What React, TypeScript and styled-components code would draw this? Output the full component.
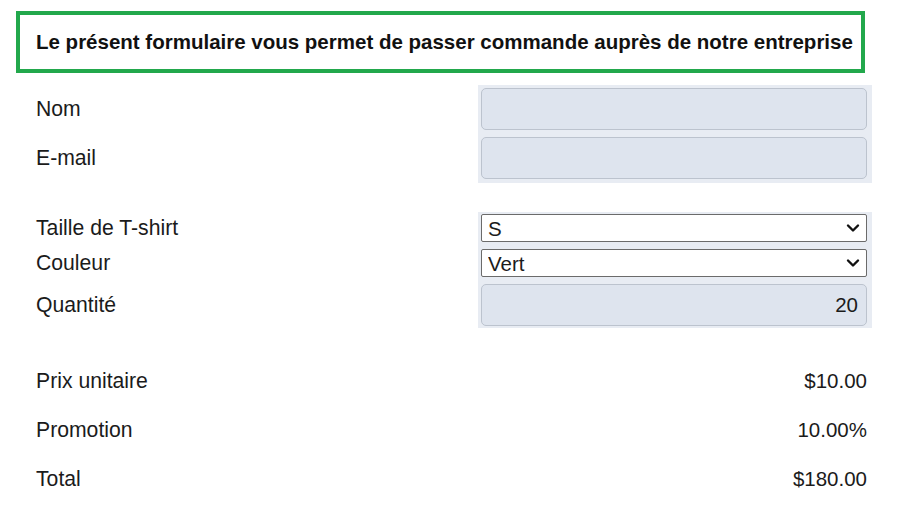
import React from "react";
import styled, { createGlobalStyle } from "styled-components";

const GlobalStyle = createGlobalStyle`
  html, body { margin: 0; padding: 0; background: #ffffff; }
  body { font-family: "Liberation Sans", Arial, sans-serif; color: #1b1b1b; }
  * { box-sizing: border-box; }
`;

const Page = styled.div`
  width: 900px;
  padding: 11px 0 0 16px;
`;

const Header = styled.div`
  width: 849px;
  height: 62px;
  border: 4px solid #22a84c;
  display: flex;
  align-items: center;
  padding-left: 16px;
  font-size: 20.5px;
  font-weight: 700;
  color: #111;
`;

const Form = styled.form`
  display: flex;
  flex-direction: column;
  padding-left: 20px;
  margin-top: 12px;
`;

const Section = styled.div<{ $mt?: number }>`
  display: grid;
  grid-template-columns: 442px 394px;
  margin-top: ${(p) => p.$mt ?? 0}px;
`;

const LabelColumn = styled.div<{ $pad: string; $gap: number }>`
  display: flex;
  flex-direction: column;
  padding: ${(p) => p.$pad};
  gap: ${(p) => p.$gap}px;
`;

const Label = styled.label<{ $h: number }>`
  height: ${(p) => p.$h}px;
  display: flex;
  align-items: center;
  font-size: 21.2px;
  color: #1b1b1b;
`;

const Panel = styled.div<{ $pad: string; $gap: number }>`
  display: flex;
  flex-direction: column;
  background: #e8ecf3;
  padding: ${(p) => p.$pad};
  gap: ${(p) => p.$gap}px;
`;

const TextInput = styled.input<{ $h: number }>`
  height: ${(p) => p.$h}px;
  width: 100%;
  background: #dee4ee;
  border: 1.5px solid #bcc3ce;
  border-radius: 5px;
  font-family: "Liberation Sans", Arial, sans-serif;
  font-size: 20.5px;
  color: #1b1b1b;
  text-align: ${(p) => (p.type === "number" ? "right" : "left")};
  padding: 0 8px;
  outline: none;
  -moz-appearance: textfield;
  &::-webkit-outer-spin-button,
  &::-webkit-inner-spin-button {
    -webkit-appearance: none;
    margin: 0;
  }
`;

const SelectBox = styled.div`
  height: 28px;
  display: flex;
  align-items: center;
  background: #ffffff;
  border: 1px solid #6b6b6b;
  border-radius: 2px;
  padding-right: 6px;
`;

const Select = styled.select`
  appearance: none;
  -webkit-appearance: none;
  flex: 1;
  height: 100%;
  border: none;
  background: transparent;
  font-family: "Liberation Sans", Arial, sans-serif;
  font-size: 20.5px;
  color: #1b1b1b;
  padding: 0 0 0 6px;
  outline: none;
`;

const Chevron = styled.svg`
  width: 14px;
  height: 10px;
  flex: none;
`;

const Results = styled.div`
  display: flex;
  flex-direction: column;
  margin-top: 28px;
`;

const ResultRow = styled.div`
  height: 49px;
  width: 831px;
  display: flex;
  align-items: center;
  justify-content: space-between;
  color: #1b1b1b;
`;

const ResultLabel = styled.span`
  font-size: 21.2px;
`;

const ResultValue = styled.span`
  font-size: 20.5px;
`;

const ChevronIcon = () => (
  <Chevron viewBox="0 0 14 10">
    <path d="M2 2.5 L7 7.5 L12 2.5" fill="none" stroke="#111" strokeWidth="2.4" strokeLinecap="round" strokeLinejoin="round" />
  </Chevron>
);

const results = [
  { label: "Prix unitaire", value: "$10.00" },
  { label: "Promotion", value: "10.00%" },
  { label: "Total", value: "$180.00" },
];

export default function App() {
  return (
    <>
      <GlobalStyle />
      <Page>
        <Header>Le présent formulaire vous permet de passer commande auprès de notre entreprise</Header>
        <Form onSubmit={(e) => e.preventDefault()}>
          <Section>
            <LabelColumn $pad="3px 0 4px" $gap={7}>
              <Label $h={42} htmlFor="nom">Nom</Label>
              <Label $h={42} htmlFor="email">E-mail</Label>
            </LabelColumn>
            <Panel $pad="3px 5px 4px 3px" $gap={7}>
              <TextInput $h={42} id="nom" type="text" />
              <TextInput $h={42} id="email" type="email" />
            </Panel>
          </Section>
          <Section $mt={29}>
            <LabelColumn $pad="2px 0" $gap={7}>
              <Label $h={28}>Taille de T-shirt</Label>
              <Label $h={28}>Couleur</Label>
              <Label $h={42}>Quantité</Label>
            </LabelColumn>
            <Panel $pad="2px 5px 2px 3px" $gap={7}>
              <SelectBox>
                <Select defaultValue="S">
                  <option>XS</option>
                  <option>S</option>
                  <option>M</option>
                  <option>L</option>
                  <option>XL</option>
                </Select>
                <ChevronIcon />
              </SelectBox>
              <SelectBox>
                <Select defaultValue="Vert">
                  <option>Rouge</option>
                  <option>Vert</option>
                  <option>Bleu</option>
                </Select>
                <ChevronIcon />
              </SelectBox>
              <TextInput $h={42} type="number" defaultValue={20} />
            </Panel>
          </Section>
          <Results>
            {results.map((r) => (
              <ResultRow key={r.label}>
                <ResultLabel>{r.label}</ResultLabel>
                <ResultValue>{r.value}</ResultValue>
              </ResultRow>
            ))}
          </Results>
        </Form>
      </Page>
    </>
  );
}
